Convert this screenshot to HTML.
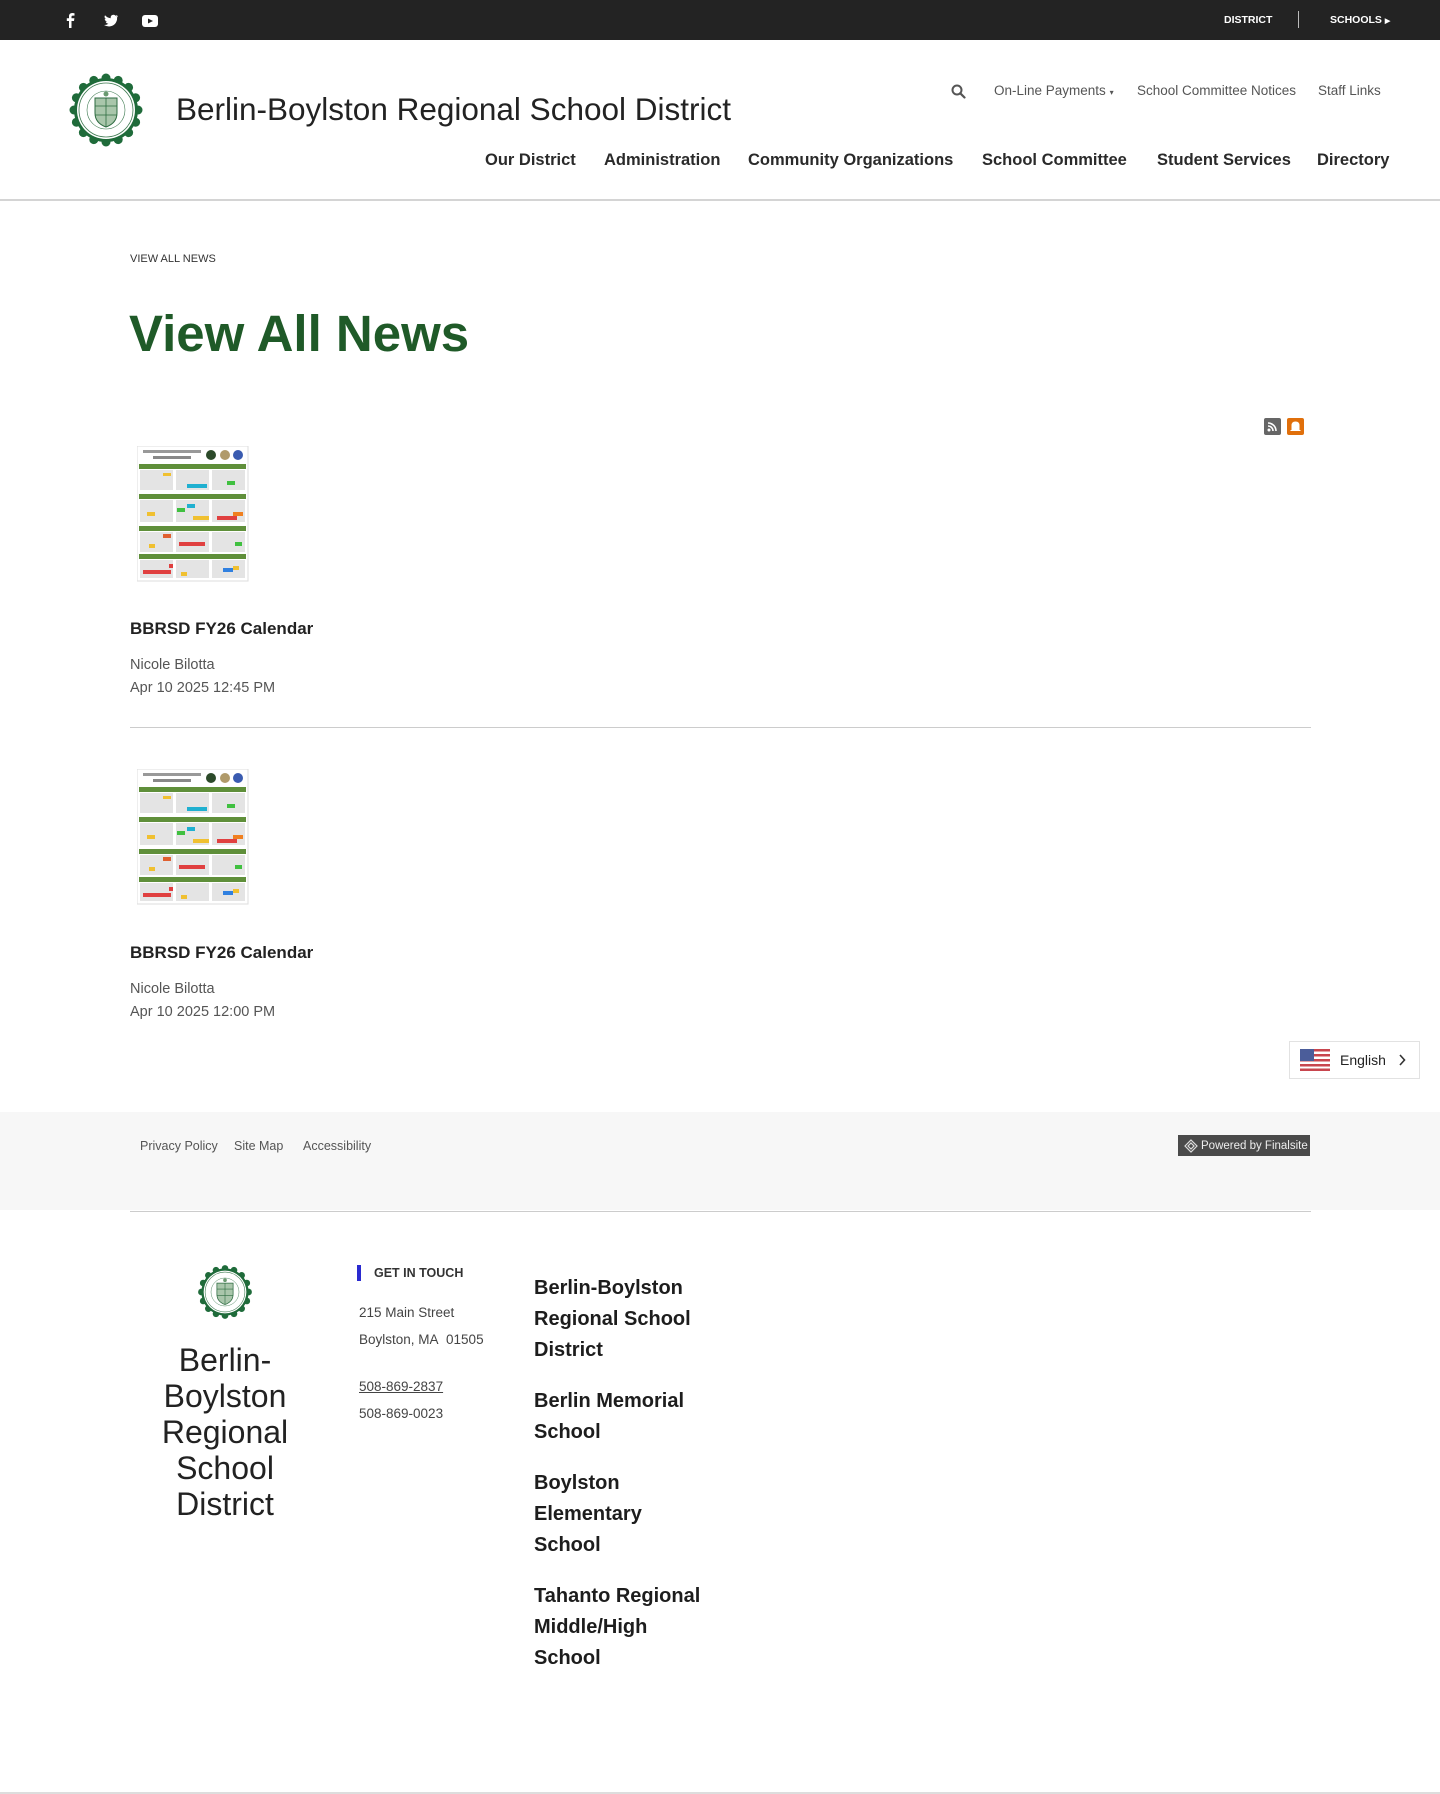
<!DOCTYPE html>
<html><head><meta charset="utf-8"><style>
*{margin:0;padding:0;box-sizing:border-box}
body{width:1440px;height:1794px;position:relative;background:#fff;font-family:"Liberation Sans",sans-serif;color:#222;overflow:hidden}
.a{position:absolute;white-space:nowrap}
.top{position:absolute;left:0;top:0;width:1440px;height:40px;background:#232323}
.util{font-size:13.5px;color:#555;top:83px}
.nav{font-size:16.5px;font-weight:bold;color:#2a2a2a;top:150px}
.ttl{font-size:17px;font-weight:bold;color:#222}
.meta{font-size:14.5px;color:#555}
.fl{font-size:12.5px;color:#555;top:1139px}
.addr{font-size:13.5px;color:#444;left:359px}
.sch{font-size:20px;font-weight:bold;color:#1d1d1d;line-height:31px;left:534px;white-space:normal;width:172px}
.big{font-size:32px;color:#222;line-height:36px;text-align:center;left:148px;width:154px;white-space:normal}
</style></head><body>
<svg width="0" height="0" style="position:absolute"><defs>
<g id="logo">
<circle cx="0" cy="0" r="32" fill="#1f6b3a"/>
<g fill="#1f6b3a"><circle cx="0" cy="-32" r="4.5"/><circle cx="0" cy="32" r="4.5"/><circle cx="-32" cy="0" r="4.5"/><circle cx="32" cy="0" r="4.5"/><circle cx="22.6" cy="22.6" r="4.5"/><circle cx="-22.6" cy="22.6" r="4.5"/><circle cx="22.6" cy="-22.6" r="4.5"/><circle cx="-22.6" cy="-22.6" r="4.5"/><circle cx="12.2" cy="-29.6" r="4.5"/><circle cx="-12.2" cy="-29.6" r="4.5"/><circle cx="12.2" cy="29.6" r="4.5"/><circle cx="-12.2" cy="29.6" r="4.5"/><circle cx="29.6" cy="12.2" r="4.5"/><circle cx="-29.6" cy="12.2" r="4.5"/><circle cx="29.6" cy="-12.2" r="4.5"/><circle cx="-29.6" cy="-12.2" r="4.5"/></g>
<circle cx="0" cy="0" r="29" fill="#fff"/>
<circle cx="0" cy="0" r="27" fill="none" stroke="#3d7a50" stroke-width="0.8"/>
<circle cx="0" cy="0" r="19" fill="none" stroke="#3d7a50" stroke-width="0.6"/>
<path d="M-11,-12 H11 V3 Q11,13 0,17 Q-11,13 -11,3 Z" fill="#a9c6ab" stroke="#2d6b40" stroke-width="1"/>
<path d="M-11,-4 H11 M-11,5 H11 M0,-12 V17" stroke="#2d6b40" stroke-width="0.8"/>
<circle cx="0" cy="-16" r="2.5" fill="#6a9a70"/>
</g>
<g id="cal">
<rect width="111" height="135" fill="#fff" stroke="#ddd"/>
<rect x="6" y="4" width="58" height="3" fill="#999"/><rect x="16" y="10" width="38" height="3" fill="#888"/>
<circle cx="74" cy="9" r="5" fill="#2c4a2a"/><circle cx="88" cy="9" r="5" fill="#b09a6a"/><circle cx="101" cy="9" r="5" fill="#3a5bb0"/>
<g fill="#5f8f3a"><rect x="2" y="18" width="107" height="5"/><rect x="2" y="48" width="107" height="5"/><rect x="2" y="80" width="107" height="5"/><rect x="2" y="108" width="107" height="5"/></g>
<g fill="#e4e4e4"><rect x="3" y="24" width="33" height="20"/><rect x="39" y="24" width="33" height="20"/><rect x="75" y="24" width="33" height="20"/><rect x="3" y="54" width="33" height="22"/><rect x="39" y="54" width="33" height="22"/><rect x="75" y="54" width="33" height="22"/><rect x="3" y="86" width="33" height="20"/><rect x="39" y="86" width="33" height="20"/><rect x="75" y="86" width="33" height="20"/><rect x="3" y="114" width="33" height="18"/><rect x="39" y="114" width="33" height="18"/><rect x="75" y="114" width="33" height="18"/></g>
<rect x="26" y="27" width="8" height="3" fill="#f0c030"/><rect x="50" y="38" width="20" height="4" fill="#20b0d0"/><rect x="90" y="35" width="8" height="4" fill="#40c040"/>
<rect x="10" y="66" width="8" height="4" fill="#f0c030"/><rect x="40" y="62" width="8" height="4" fill="#40c040"/><rect x="50" y="58" width="8" height="4" fill="#20b0d0"/><rect x="56" y="70" width="16" height="4" fill="#f0c030"/><rect x="80" y="70" width="20" height="4" fill="#e04040"/><rect x="96" y="66" width="10" height="4" fill="#f08020"/>
<rect x="26" y="88" width="8" height="4" fill="#e06030"/><rect x="12" y="98" width="6" height="4" fill="#f0c030"/><rect x="42" y="96" width="26" height="4" fill="#e04040"/><rect x="98" y="96" width="7" height="4" fill="#40c040"/>
<rect x="32" y="118" width="4" height="4" fill="#e04040"/><rect x="6" y="124" width="28" height="4" fill="#e04040"/><rect x="44" y="126" width="6" height="4" fill="#f0c030"/><rect x="86" y="122" width="10" height="4" fill="#3080e0"/><rect x="96" y="120" width="6" height="4" fill="#f0c030"/>
</g></defs></svg>

<div class="top"></div>
<svg class="a" style="left:64px;top:11px" width="96" height="18" viewBox="0 0 96 18">
<path d="M7.5,17 V10 H10 L10.4,7.3 H7.5 V5.6 Q7.5,4.6 8.7,4.6 H10.5 V2.2 Q9.5,2 8.3,2 Q5,2 5,5.3 V7.3 H2.8 V10 H5 V17 Z" fill="#fff"/>
<path d="M54,5 Q53,5.5 52.3,5.6 Q53.2,5 53.5,4 Q52.6,4.5 51.6,4.7 Q50,3 47.8,4.3 Q46.4,5.3 46.7,7.2 Q43.4,7 41,4.3 Q39.8,6.6 42,8.2 Q41.3,8.2 40.7,7.8 Q40.8,10 43,10.6 Q42.3,10.8 41.6,10.6 Q42.3,12.6 44.4,12.7 Q42.4,14.2 40,14 Q46,17.3 50.6,13.3 Q53.4,10.4 53.1,6.4 Q53.8,5.8 54,5 Z" fill="#fff"/>
<rect x="78" y="4" width="16" height="12" rx="3" fill="#fff"/><path d="M84,7.5 L89,10 L84,12.5 Z" fill="#232323"/>
</svg>
<div class="a" style="left:1224px;top:14px;font-size:10.5px;font-weight:bold;color:#fff">DISTRICT</div>
<div class="a" style="left:1298px;top:11px;width:1px;height:17px;background:#bbb"></div>
<div class="a" style="left:1330px;top:14px;font-size:10.5px;font-weight:bold;color:#fff">SCHOOLS <span style="font-size:7px">&#9654;</span></div>

<svg class="a" style="left:68px;top:72px" width="76" height="76" viewBox="-38 -38 76 76"><use href="#logo"/></svg>
<div class="a" style="left:176px;top:91px;font-size:31.5px;color:#222">Berlin-Boylston Regional School District</div>

<svg class="a" style="left:951px;top:84px" width="15" height="15" viewBox="0 0 15 15"><circle cx="6" cy="6" r="4.5" fill="none" stroke="#555" stroke-width="2"/><path d="M9.3,9.3 L13.5,13.5" stroke="#555" stroke-width="2.2" stroke-linecap="round"/></svg>
<div class="a util" style="left:994px">On-Line Payments <span style="font-size:8px">&#9662;</span></div>
<div class="a util" style="left:1137px">School Committee Notices</div>
<div class="a util" style="left:1318px">Staff Links</div>

<div class="a nav" style="left:485px;top:151px">Our District</div>
<div class="a nav" style="left:604px;top:151px">Administration</div>
<div class="a nav" style="left:748px;top:151px">Community Organizations</div>
<div class="a nav" style="left:982px;top:151px">School Committee</div>
<div class="a nav" style="left:1157px;top:151px">Student Services</div>
<div class="a nav" style="left:1317px;top:151px">Directory</div>
<div class="a" style="left:0;top:199px;width:1440px;height:2px;background:#d4d4d4"></div>

<div class="a" style="left:130px;top:253px;font-size:11px;color:#333">VIEW ALL NEWS</div>
<div class="a" style="left:129px;top:304px;font-size:51px;font-weight:bold;color:#1f5a28">View All News</div>

<div class="a" style="left:1264px;top:418px;width:17px;height:17px;background:#666;border-radius:2px"></div>
<svg class="a" style="left:1264px;top:418px" width="17" height="17" viewBox="0 0 17 17"><circle cx="5" cy="12" r="1.5" fill="#fff"/><path d="M4,8 A5,5 0 0 1 9,13 M4,5 A8,8 0 0 1 12,13" fill="none" stroke="#fff" stroke-width="1.6"/></svg>
<div class="a" style="left:1287px;top:418px;width:17px;height:17px;background:#e06f0b;border-radius:2px"></div>
<svg class="a" style="left:1287px;top:418px" width="17" height="17" viewBox="0 0 17 17"><path d="M4.5,12 V7.5 Q4.5,3.5 8.5,3.5 Q12.5,3.5 12.5,7.5 V12 H13.5 V13 H3.5 V12 Z" fill="#fff"/></svg>

<svg class="a" style="left:137px;top:446px" width="112" height="136"><use href="#cal"/></svg>
<div class="a ttl" style="left:130px;top:619px">BBRSD FY26 Calendar</div>
<div class="a meta" style="left:130px;top:657px">Nicole Bilotta</div>
<div class="a meta" style="left:130px;top:680px">Apr 10 2025 12:45 PM</div>
<div class="a" style="left:130px;top:727px;width:1181px;height:1px;background:#ccc"></div>

<svg class="a" style="left:137px;top:769px" width="112" height="136"><use href="#cal"/></svg>
<div class="a ttl" style="left:130px;top:943px">BBRSD FY26 Calendar</div>
<div class="a meta" style="left:130px;top:981px">Nicole Bilotta</div>
<div class="a meta" style="left:130px;top:1004px">Apr 10 2025 12:00 PM</div>

<div class="a" style="left:1289px;top:1041px;width:131px;height:38px;border:1px solid #e2e2e2;background:#fff"></div>
<svg class="a" style="left:1300px;top:1049px" width="30" height="22" viewBox="0 0 30 22"><g fill="#c8464e"><rect y="0" width="30" height="2.5"/><rect y="5" width="30" height="2.5"/><rect y="10" width="30" height="2.5"/><rect y="15" width="30" height="2.5"/><rect y="19.5" width="30" height="2.5"/></g><rect width="14" height="12" fill="#4b5d9a"/></svg>
<div class="a" style="left:1340px;top:1052px;font-size:14px;color:#222">English</div>
<svg class="a" style="left:1398px;top:1054px" width="8" height="12" viewBox="0 0 8 12"><path d="M2,1 L6.5,6 L2,11" fill="none" stroke="#333" stroke-width="1.6"/></svg>

<div class="a" style="left:0;top:1112px;width:1440px;height:98px;background:#f7f7f7"></div>
<div class="a fl" style="left:140px">Privacy Policy</div>
<div class="a fl" style="left:234px">Site Map</div>
<div class="a fl" style="left:303px">Accessibility</div>
<div class="a" style="left:1178px;top:1135px;width:132px;height:21px;background:#4a4a4a"></div>
<svg class="a" style="left:1184px;top:1139px" width="14" height="14" viewBox="0 0 14 14"><path d="M7,1 L13,7 L7,13 L1,7 Z M4,7 L7,4 L10,7 L7,10 Z" fill="none" stroke="#ddd" stroke-width="1.2"/></svg>
<div class="a" style="left:1201px;top:1140px;font-size:11.5px;color:#eee">Powered by Finalsite</div>
<div class="a" style="left:130px;top:1211px;width:1181px;height:1px;background:#ccc"></div>

<svg class="a" style="left:197px;top:1264px" width="56" height="56" viewBox="-38 -38 76 76"><use href="#logo"/></svg>
<div class="a big" style="top:1342px">Berlin-Boylston Regional School District</div>

<div class="a" style="left:357px;top:1265px;width:4px;height:16px;background:#2a2ad0"></div>
<div class="a" style="left:374px;top:1266px;font-size:12.5px;font-weight:bold;color:#333">GET IN TOUCH</div>
<div class="a addr" style="top:1305px">215 Main Street</div>
<div class="a addr" style="top:1332px">Boylston, MA&nbsp; 01505</div>
<div class="a addr" style="top:1379px;text-decoration:underline">508-869-2837</div>
<div class="a addr" style="top:1406px">508-869-0023</div>

<div class="a sch" style="top:1273px">Berlin-Boylston Regional School District</div>
<div class="a sch" style="top:1386px">Berlin Memorial School</div>
<div class="a sch" style="top:1468px">Boylston Elementary School</div>
<div class="a sch" style="top:1581px">Tahanto Regional Middle/High School</div>

<div class="a" style="left:0;top:1792px;width:1440px;height:2px;background:#ddd"></div>
</body></html>
